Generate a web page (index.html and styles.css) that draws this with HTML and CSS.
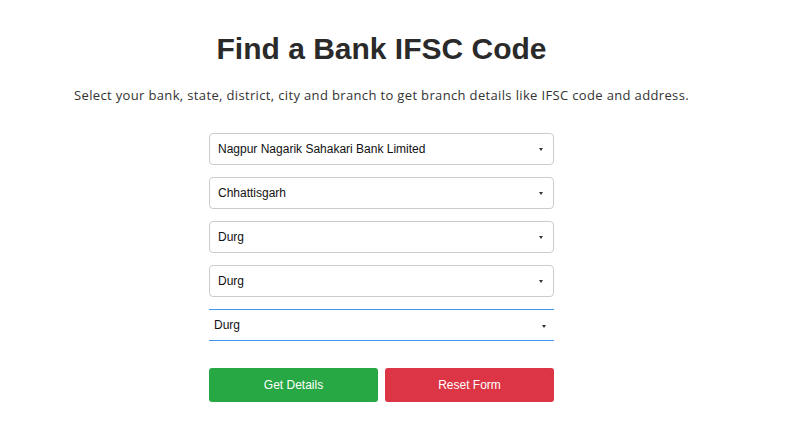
FILE: index.html
```html
<!DOCTYPE html>
<html>
<head>
<meta charset="utf-8">
<link rel="stylesheet" href="styles.css">
</head>
<body>
<main class="page">
  <h1 class="title">Find a Bank IFSC Code</h1>
  <p class="lead">Select your bank, state, district, city and branch to get branch details like IFSC code and address.</p>
  <form class="form">
    <div class="field">
      <select class="select"><option>Nagpur Nagarik Sahakari Bank Limited</option></select>
      <span class="caret"></span>
    </div>
    <div class="field">
      <select class="select"><option>Chhattisgarh</option></select>
      <span class="caret"></span>
    </div>
    <div class="field">
      <select class="select"><option>Durg</option></select>
      <span class="caret"></span>
    </div>
    <div class="field">
      <select class="select"><option>Durg</option></select>
      <span class="caret"></span>
    </div>
    <div class="field">
      <select class="select select-line"><option>Durg</option></select>
      <span class="caret caret-line"></span>
    </div>
    <div class="actions">
      <button type="button" class="btn btn-green">Get Details</button>
      <button type="button" class="btn btn-red">Reset Form</button>
    </div>
  </form>
</main>
</body>
</html>
```
FILE: styles.css
```css
html, body {
  margin: 0;
  padding: 0;
  background: #fff;
}
.page {
  width: 763px;
  display: flex;
  flex-direction: column;
  align-items: center;
  font-family: "Liberation Sans", Arial, sans-serif;
}
.title {
  margin: 31px 0 0;
  font-size: 30px;
  line-height: 36px;
  font-weight: 700;
  color: #2a2a2a;
  letter-spacing: 0;
}
.lead {
  margin: 19px 0 0;
  font-family: "Open Sans", sans-serif;
  font-size: 13px;
  line-height: 18px;
  color: #333;
  letter-spacing: 0.35px;
}
.form {
  width: 345px;
  margin-top: 29px;
  display: flex;
  flex-direction: column;
  gap: 12px;
}
.field {
  position: relative;
  height: 32px;
}
.select {
  -webkit-appearance: none;
  appearance: none;
  width: 100%;
  height: 32px;
  margin: 0;
  padding: 0 24px 0 8px;
  border: 1px solid #cccccc;
  border-radius: 4px;
  background: #fff;
  font-family: "Liberation Sans", Arial, sans-serif;
  font-size: 12px;
  color: #111;
  outline: none;
}
.select-line {
  border: none;
  border-top: 1px solid #3f97f2;
  border-bottom: 1px solid #3f97f2;
  border-radius: 0;
  padding-left: 5px;
}
.caret {
  position: absolute;
  right: 11px;
  top: 15px;
  width: 0;
  height: 0;
  border-left: 2.5px solid transparent;
  border-right: 2.5px solid transparent;
  border-top: 3px solid #333;
  pointer-events: none;
}
.caret-line {
  right: 8px;
  top: 16px;
}
.actions {
  display: flex;
  gap: 7px;
  margin-top: 15px;
}
.btn {
  flex: 1;
  height: 34px;
  border: none;
  border-radius: 3px;
  color: #fff;
  font-family: "Liberation Sans", Arial, sans-serif;
  font-size: 12px;
  cursor: pointer;
}
.btn-green { background: #28a745; }
.btn-red { background: #dc3545; }
```
